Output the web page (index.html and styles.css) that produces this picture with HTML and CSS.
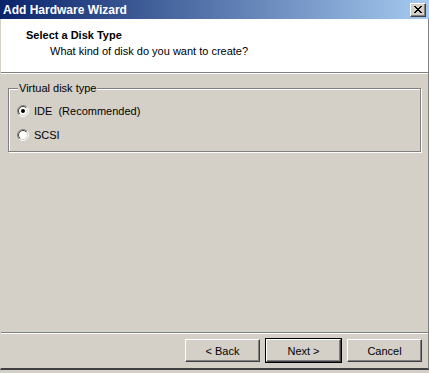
FILE: index.html
```html
<!DOCTYPE html>
<html lang="en">
<head>
    <meta charset="UTF-8">
    <meta name="viewport" content="width=device-width, initial-scale=1.0">
    <title>Add Hardware Wizard</title>
    <link rel="stylesheet" href="styles.css">
</head>
<body>
    <div class="window">
        <div class="titlebar">
            <span class="title">Add Hardware Wizard</span>
            <button class="close" title="Close">
                <svg width="8" height="7" viewBox="0 0 8 7" shape-rendering="crispEdges">
                    <path d="M0 0h2v1h-2zM6 0h2v1h-2zM1 1h2v1h-2zM5 1h2v1h-2zM2 2h4v1h-4zM3 3h2v1h-2zM2 4h4v1h-4zM1 5h2v1h-2zM5 5h2v1h-2zM0 6h2v1h-2zM6 6h2v1h-2z" fill="#000"/>
                </svg>
            </button>
        </div>
        <div class="frame">
            <div class="header">
                <div class="heading">Select a Disk Type</div>
                <div class="subheading">What kind of disk do you want to create?</div>
            </div>
            <div class="content">
                <fieldset class="group">
                    <legend>Virtual disk type</legend>
                    <label class="option">
                        <span class="radio">
                            <svg width="12" height="12" viewBox="0 0 12 12">
                                <defs>
                                    <linearGradient id="outer" x1="0" y1="0" x2="1" y2="1">
                                        <stop offset="0.5" stop-color="#808080"/>
                                        <stop offset="0.5" stop-color="#ffffff"/>
                                    </linearGradient>
                                    <linearGradient id="inner" x1="0" y1="0" x2="1" y2="1">
                                        <stop offset="0.5" stop-color="#404040"/>
                                        <stop offset="0.5" stop-color="#d4d0c8"/>
                                    </linearGradient>
                                </defs>
                                <circle cx="6" cy="6" r="5.5" fill="none" stroke="url(#outer)"/>
                                <circle cx="6" cy="6" r="4.5" fill="#fff" stroke="url(#inner)"/>
                                <circle cx="6" cy="6" r="2" fill="#000"/>
                            </svg>
                        </span>
                        IDE&nbsp;&nbsp;(Recommended)
                    </label>
                    <label class="option">
                        <span class="radio">
                            <svg width="12" height="12" viewBox="0 0 12 12">
                                <circle cx="6" cy="6" r="5.5" fill="none" stroke="url(#outer)"/>
                                <circle cx="6" cy="6" r="4.5" fill="#fff" stroke="url(#inner)"/>
                            </svg>
                        </span>
                        SCSI
                    </label>
                </fieldset>
            </div>
            <div class="footer">
                <button class="btn">&lt; Back</button>
                <button class="btn default">Next &gt;</button>
                <button class="btn">Cancel</button>
            </div>
        </div>
    </div>
</body>
</html>
```

FILE: styles.css
```css
* {
    box-sizing: border-box;
}
body {
    margin: 0;
    background-color: #d4d0c8;
    font-family: "Liberation Sans", Arial, sans-serif;
    font-size: 11px;
    color: #000;
}
.window {
    width: 429px;
    height: 370px;
    display: flex;
    flex-direction: column;
    background-color: #d4d0c8;
}
.titlebar {
    height: 19px;
    display: flex;
    align-items: center;
    justify-content: space-between;
    padding: 0 3px 0 3px;
    background: linear-gradient(to right, #0a246a, #a6caf0);
}
.title {
    color: #fff;
    font-weight: bold;
    font-size: 12px;
}
.close {
    width: 16px;
    height: 14px;
    padding: 0;
    display: flex;
    align-items: center;
    justify-content: center;
    background-color: #d4d0c8;
    border: 1px solid;
    border-color: #fff #404040 #404040 #fff;
    box-shadow: inset -1px -1px 0 #808080;
}
.frame {
    flex: 1;
    display: flex;
    flex-direction: column;
    border-left: 1px solid #d4d0c8;
    border-right: 1px solid #808080;
    border-bottom: 2px solid #404040;
    box-shadow: 0 1px 0 #808080 inset;
}
.header {
    height: 54px;
    background-color: #fff;
    border-bottom: 1px solid #808080;
    padding: 10px 0 0 25px;
}
.heading {
    font-weight: bold;
    line-height: 13px;
}
.subheading {
    margin: 3px 0 0 24px;
    line-height: 13px;
}
.content {
    height: 260px;
    border-top: 1px solid #fff;
    border-bottom: 1px solid #808080;
    padding: 8px 7px 0 7px;
}
.group {
    margin: 0;
    padding: 4px 0 4px 8px;
    border: 1px solid #808080;
    box-shadow: inset 1px 1px 0 #fff, 1px 1px 0 #fff;
}
.group legend {
    padding: 0 1px;
    margin-left: 1px;
    line-height: 13px;
    background-color: #d4d0c8;
}
.option {
    display: flex;
    align-items: center;
    height: 24px;
}
.radio {
    display: flex;
    width: 12px;
    height: 12px;
    margin-right: 5px;
}
.footer {
    flex: 1;
    display: flex;
    justify-content: flex-end;
    align-items: flex-start;
    gap: 6px;
    border-top: 1px solid #fff;
    padding: 5px 6px 0 0;
}
.btn {
    width: 75px;
    height: 23px;
    padding: 0;
    font-family: inherit;
    font-size: 11px;
    color: #000;
    background-color: #d4d0c8;
    border: 1px solid;
    border-color: #fff #404040 #404040 #fff;
    box-shadow: inset -1px -1px 0 #808080;
}
.btn.default {
    outline: 1px solid #000;
}
```
